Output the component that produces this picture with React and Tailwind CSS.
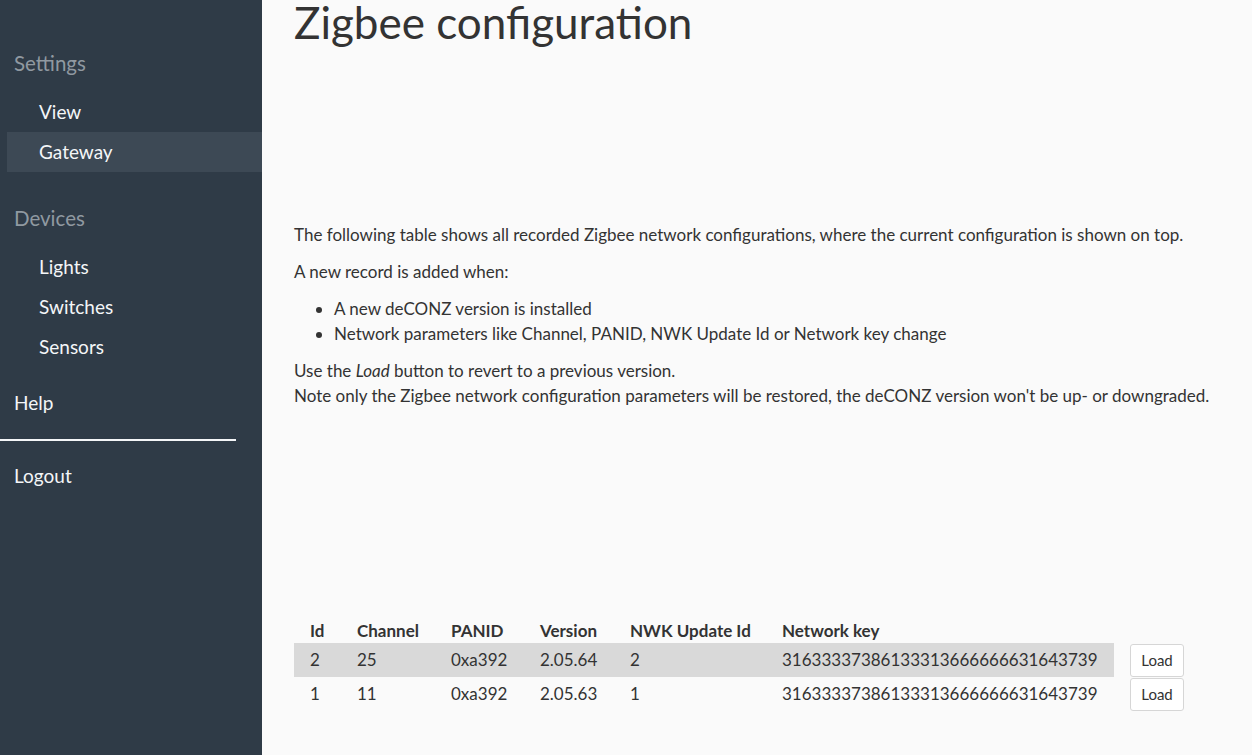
const rows = [
  { id: 2, channel: 25, panid: "0xa392", version: "2.05.64", nwk: 2, key: "31633337386133313666666631643739", current: true },
  { id: 1, channel: 11, panid: "0xa392", version: "2.05.63", nwk: 1, key: "31633337386133313666666631643739" },
];

function NavHeader({ children }) {
  return <div className="pl-[14px] text-[20.5px] leading-[40px] text-[#9099a1]">{children}</div>;
}

function NavItem({ children, active }) {
  return (
    <div
      className={
        "ml-[7px] h-[40px] pl-[32px] text-[19px] leading-[40px] text-[#f4f6f8] " +
        (active ? "bg-[#3d4955]" : "")
      }
    >
      {children}
    </div>
  );
}

export default function App() {
  return (
    <div className="flex min-h-screen bg-[#fafafa] font-['Lato',sans-serif] text-[#333]">
      <aside className="w-[262px] shrink-0 bg-[#2f3b47] pt-[43px]">
        <NavHeader>Settings</NavHeader>
        <div className="mt-[9px]">
          <NavItem>View</NavItem>
          <NavItem active>Gateway</NavItem>
        </div>
        <div className="mt-[26px]">
          <NavHeader>Devices</NavHeader>
        </div>
        <div className="mt-[9px]">
          <NavItem>Lights</NavItem>
          <NavItem>Switches</NavItem>
          <NavItem>Sensors</NavItem>
        </div>
        <div className="mt-[16px] pl-[14px] text-[19px] leading-[40px] text-[#f4f6f8]">Help</div>
        <div className="mt-[16px] h-[2px] w-[236px] bg-[#f4f6f8]" />
        <div className="mt-[15px] pl-[14px] text-[19px] leading-[40px] text-[#f4f6f8]">Logout</div>
      </aside>

      <main className="flex-1 pl-[32px] pr-[20px]">
        <h1 className="text-[44px] leading-none text-[#333]">Zigbee configuration</h1>

        <div className="mt-[178px] text-[17px] leading-[25px]">
          <p className="mb-3">
            The following table shows all recorded Zigbee network configurations, where the current configuration is
            shown on top.
          </p>
          <p className="mb-3">A new record is added when:</p>
          <ul className="mb-3 list-disc pl-[40px]">
            <li>A new deCONZ version is installed</li>
            <li>Network parameters like Channel, PANID, NWK Update Id or Network key change</li>
          </ul>
          <p>
            Use the <em>Load</em> button to revert to a previous version.
            <br />
            Note only the Zigbee network configuration parameters will be restored, the deCONZ version won't be up- or
            downgraded.
          </p>
        </div>

        <table className="mt-[205px] border-collapse text-left text-[17px]">
          <thead>
            <tr className="h-[30px] align-bottom">
              <th className="w-[47px] pl-[16px] font-bold">Id</th>
              <th className="w-[94px] pl-[16px] font-bold">Channel</th>
              <th className="w-[89px] pl-[16px] font-bold">PANID</th>
              <th className="w-[90px] pl-[16px] font-bold">Version</th>
              <th className="w-[152px] pl-[16px] font-bold">NWK Update Id</th>
              <th className="w-[348px] pl-[16px] font-bold">Network key</th>
              <th className="pl-[16px]" />
            </tr>
          </thead>
          <tbody>
            {rows.map((r) => (
              <tr key={r.id} className="h-[34px]">
                <td className={"pl-[16px] " + (r.current ? "bg-[#d9d9d9]" : "")}>{r.id}</td>
                <td className={"pl-[16px] " + (r.current ? "bg-[#d9d9d9]" : "")}>{r.channel}</td>
                <td className={"pl-[16px] " + (r.current ? "bg-[#d9d9d9]" : "")}>{r.panid}</td>
                <td className={"pl-[16px] " + (r.current ? "bg-[#d9d9d9]" : "")}>{r.version}</td>
                <td className={"pl-[16px] " + (r.current ? "bg-[#d9d9d9]" : "")}>{r.nwk}</td>
                <td className={"pl-[16px] " + (r.current ? "bg-[#d9d9d9]" : "")}>{r.key}</td>
                <td className="pl-[16px]">
                  <button
                    type="button"
                    className="h-[33px] w-[54px] rounded-[3px] border border-[#d6d6d6] bg-white text-[15px] text-[#333]"
                  >
                    Load
                  </button>
                </td>
              </tr>
            ))}
          </tbody>
        </table>
      </main>
    </div>
  );
}
